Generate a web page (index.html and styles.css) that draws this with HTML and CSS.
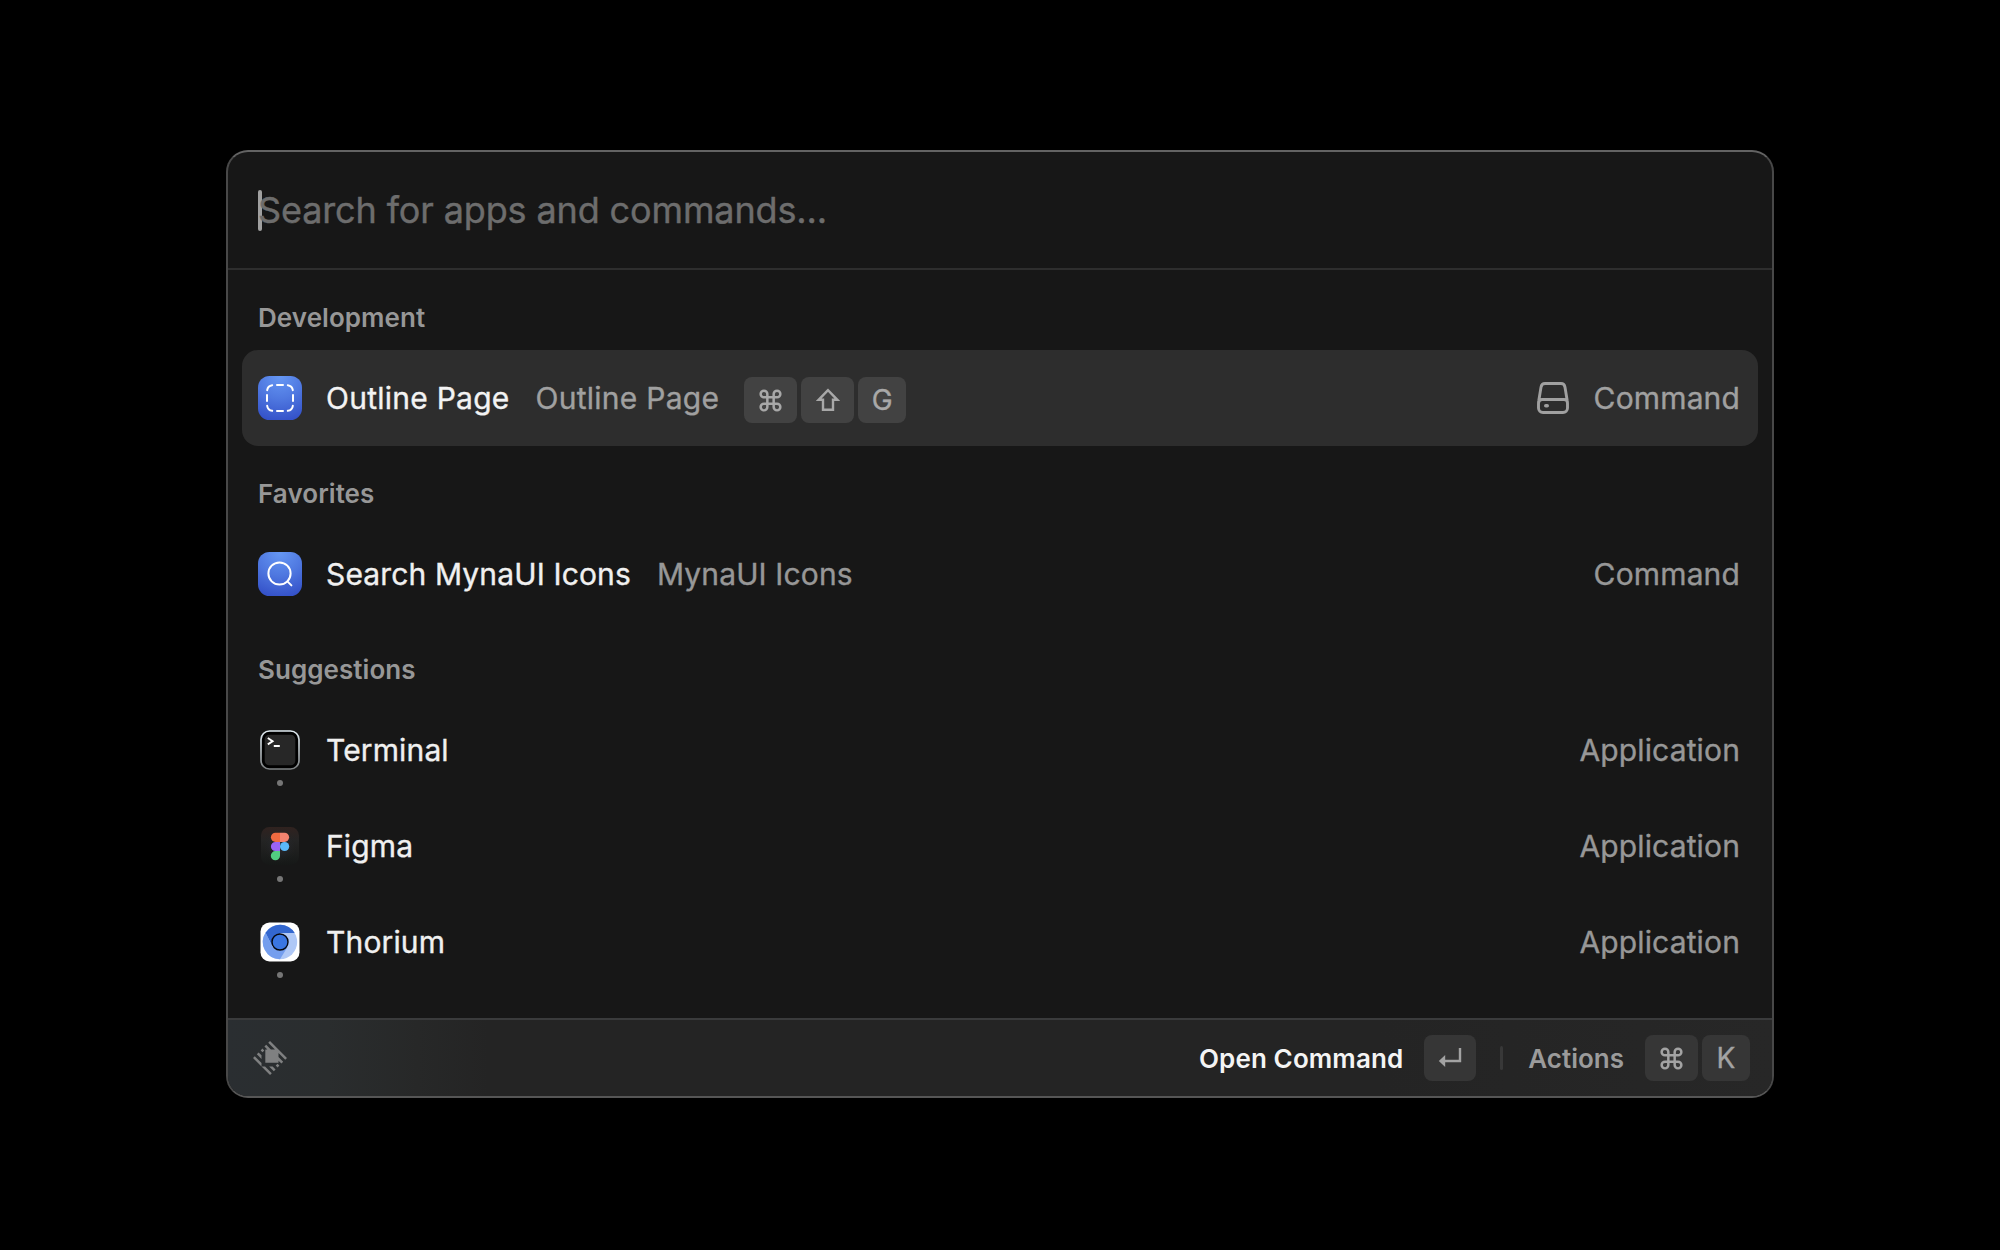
FILE: index.html
```html
<!DOCTYPE html>
<html lang="en">
<head>
<meta charset="utf-8">
<title>Launcher</title>
<link rel="stylesheet" href="styles.css">
</head>
<body>
<svg class="defs" width="0" height="0" aria-hidden="true">
  <defs>
    <radialGradient id="blue" cx="0.5" cy="0" r="1.05">
      <stop offset="0" stop-color="#6698f4"/><stop offset="0.5" stop-color="#4f78e0"/><stop offset="1" stop-color="#3350c8"/>
    </radialGradient>
    <symbol id="cmd" viewBox="0 0 24 24">
      <path fill="none" stroke="currentColor" stroke-width="2.6" d="M8.7 8.7V5.2a3.5 3.5 0 1 0-3.5 3.5h13.6a3.5 3.5 0 1 0-3.5-3.5v13.6a3.5 3.5 0 1 0 3.5-3.5H5.2a3.5 3.5 0 1 0 3.5 3.5z"/>
    </symbol>
  </defs>
</svg>
<main class="window">
  <header class="search"><span class="caret"></span><span class="placeholder">Search for apps and commands...</span></header>
  <div class="list">
    <h2 class="section">Development</h2>
    <div class="row selected">
      <svg class="icon" viewBox="0 0 44 44"><rect width="44" height="44" rx="11.5" fill="url(#blue)"/>
        <g fill="none" stroke="#fff" stroke-width="2" stroke-linecap="round"><path d="M19 9h6M19 35h6M9 19v6M35 19v6M9.2 14.2Q9.8 9.8 14.2 9.2M29.8 9.2Q34.2 9.8 34.8 14.2M34.8 29.8Q34.2 34.2 29.8 34.8M14.2 34.8Q9.8 34.2 9.2 29.8"/></g></svg>
      <span class="title">Outline Page</span>
      <span class="subtitle">Outline Page</span>
      <span class="keys">
        <kbd class="key wide"><svg class="glyph" width="23" height="23"><use href="#cmd"/></svg></kbd>
        <kbd class="key wide"><svg class="glyph" width="24" height="24" viewBox="0 0 24 24"><path fill="none" stroke="currentColor" stroke-width="2.4" d="M12 2.2 2.6 11.8H7v10h10v-10h4.400z"/></svg></kbd>
        <kbd class="key">G</kbd>
      </span>
      <svg class="drive" width="32" height="32" viewBox="0 0 32 32"><g fill="none" stroke="currentColor" stroke-width="2.900" stroke-linejoin="round"><path d="M1.500 21.500V26a4.500 4.500 0 0 0 4.500 4.500h20a4.500 4.500 0 0 0 4.500-4.500V21q0-3.500-3.500-3.500H5q-3.500 0-3.500 4zM1.500 22Q1.500 20 1.800 18.500L4 5.200Q4.600 1.500 8 1.500h16q3.400 0 4 3.700l2.200 13.300Q30.500 20 30.500 22"/></g><rect x="7" y="22" width="5" height="3.600" rx="1.800" fill="currentColor"/></svg>
      <span class="kind">Command</span>
    </div>
    <h2 class="section">Favorites</h2>
    <div class="row">
      <svg class="icon" viewBox="0 0 44 44"><rect width="44" height="44" rx="11.5" fill="url(#blue)"/><g fill="none" stroke="#fff" stroke-width="2" stroke-linecap="round"><circle cx="21.500" cy="21.500" r="11.100"/><path d="m29.400 29.400 4 4"/></g></svg>
      <span class="title">Search MynaUI Icons</span>
      <span class="subtitle">MynaUI Icons</span>
      <span class="kind">Command</span>
    </div>
    <h2 class="section">Suggestions</h2>
    <div class="row running">
      <svg class="icon" viewBox="0 0 44 44"><defs><linearGradient id="rim" x2="0" y2="1"><stop stop-color="#dfeaf0"/><stop offset="1" stop-color="#7d8183"/></linearGradient></defs><rect x="3" y="3" width="38" height="38" rx="8.500" fill="#000" stroke="url(#rim)" stroke-width="1.700"/><rect x="6.700" y="6.700" width="30.600" height="30.600" rx="4.500" fill="#272727"/><path d="m9.800 10 4.800 3.200-4.800 3.200M15.800 18h6" fill="none" stroke="#fff" stroke-width="1.900"/></svg>
      <span class="title">Terminal</span>
      <span class="kind">Application</span>
    </div>
    <div class="row running">
      <svg class="icon" viewBox="0 0 44 44"><defs><linearGradient id="fig" x2="0" y2="1"><stop stop-color="#30221f"/><stop offset="0.35" stop-color="#242424"/><stop offset="1" stop-color="#161817"/></linearGradient><radialGradient id="halo"><stop stop-color="#31354a" stop-opacity=".6"/><stop offset="1" stop-color="#222" stop-opacity="0"/></radialGradient></defs><rect x="3" y="3" width="38" height="38" rx="8.500" fill="url(#fig)"/><circle cx="22" cy="22" r="17" fill="url(#halo)"/>
        <path fill="#ef6a40" d="M22 8.700h-4.500a4.600 4.600 0 0 0 0 9.200H22z"/><path fill="#f3836f" d="M22 8.700h4.500a4.600 4.600 0 0 1 0 9.200H22z"/><path fill="#9a63f5" d="M22 17.900h-4.500a4.600 4.600 0 0 0 0 9.200H22z"/><circle cx="26.600" cy="22.500" r="4.600" fill="#5bb9f8"/><path fill="#51cc81" d="M22 27.100h-4.500a4.600 4.600 0 1 0 4.500 4.600z"/></svg>
      <span class="title">Figma</span>
      <span class="kind">Application</span>
    </div>
    <div class="row running">
      <svg class="icon" viewBox="0 0 44 44"><rect x="2.500" y="2.500" width="39" height="39" rx="9" fill="#fff"/><circle cx="22" cy="22" r="17.200" fill="#afc8f6"/><path fill="#3367cf" d="M7.700 12.500A17.200 17.200 0 0 1 36.700 13H22L14.200 26z"/><path fill="#749eee" d="M7.700 12.500A17.200 17.200 0 0 0 22 39.200L29.800 26.500 14.200 26.500z"/><path fill="#3367cf" d="M7.700 12.500 14.200 25 22 13z"/><circle cx="22" cy="22" r="8" fill="#3a76e2" stroke="#05070d" stroke-width="1.400"/></svg>
      <span class="title">Thorium</span>
      <span class="kind">Application</span>
    </div>
  </div>
  <footer class="footer">
    <svg class="logo" width="34" height="34" viewBox="0 0 24 24"><path fill="currentColor" d="M6.004 15.492v2.504L0 11.992l1.258-1.249Zm2.504 2.504H6.004L12.008 24l1.253-1.253zm14.240-4.747L24 11.997 12.003 0 10.750 1.251 15.491 6h-2.865L9.317 2.692 8.065 3.944l2.060 2.060H8.691v9.310H18v-1.432l2.060 2.060 1.252-1.252-3.312-3.320V8.506ZM6.630 5.372 5.380 6.625l1.342 1.343 1.251-1.253Zm10.655 10.655-1.247 1.251 1.342 1.343 1.253-1.251zM3.944 8.059 2.692 9.310l3.312 3.314v-2.506zm9.936 9.937h-2.504l3.314 3.312 1.250-1.252z"/></svg>
    <span class="primary">Open Command</span>
    <kbd class="key enter"><svg class="glyph" width="24" height="22" viewBox="0 0 24 22"><path fill="none" stroke="currentColor" stroke-width="2.400" d="M22 1v13H5"/><path fill="currentColor" d="M7.200 8v12L.8 14z"/></svg></kbd>
    <span class="divider"></span>
    <span class="secondary">Actions</span>
    <span class="keys">
      <kbd class="key wide"><svg class="glyph" width="23" height="23"><use href="#cmd"/></svg></kbd>
      <kbd class="key">K</kbd>
    </span>
  </footer>
</main>
</body>
</html>
```
FILE: styles.css
```css
* { box-sizing: border-box; }
body {
  margin: 0;
  height: 1250px;
  padding-top: 150px;
  background: #000;
  font-family: Inter, "Liberation Sans", sans-serif;
  font-weight: 400;
  overflow: hidden;
}
.defs { position: absolute; }
.window {
  width: 1548px;
  height: 948px;
  margin: 0 auto;
  display: flex;
  flex-direction: column;
  background: #171717;
  border: 2px solid #484848;
  border-top-color: #636363;
  border-bottom-color: #565656;
  border-radius: 22px;
  overflow: hidden;
}
.search {
  height: 118px;
  display: flex;
  align-items: center;
  padding-left: 30px;
  border-bottom: 2px solid #2e2e2e;
  font-size: 36px;
  letter-spacing: -0.13px;
  color: #6d6d6d;
  -webkit-text-stroke: 0.4px;
}
.caret {
  width: 4px;
  height: 41px;
  margin-right: -4px;
  border-radius: 2px;
  background: #a0a0a0;
}
.list { flex: 1; padding: 0 14px; }
.section {
  height: 80px;
  margin: 0;
  padding: 15px 16px 0;
  font-size: 26px;
  font-weight: 600;
  line-height: 66px;
  letter-spacing: 0.06px;
  color: #979797;
}
.row {
  position: relative;
  height: 96px;
  display: flex;
  align-items: center;
  padding: 0 18px 0 16px;
  border-radius: 16px;
  font-size: 30px;
  letter-spacing: 0.14px;
  color: #f0f0f0;
  -webkit-text-stroke: 0.35px;
}
.selected { background: #2d2d2d; color: #f3f3f3; }
.selected .title, .selected .subtitle { letter-spacing: 0.25px; }
.icon { width: 44px; height: 44px; margin-right: 24px; }
.running::after {
  content: "";
  position: absolute;
  left: 35px;
  top: 78px;
  width: 6px;
  height: 6px;
  border-radius: 50%;
  background: #767676;
}
.subtitle { margin-left: 26px; color: #979797; }
.kind { margin-left: auto; color: #979797; }
.selected .subtitle, .selected .kind { color: #a0a0a0; }
.keys { display: flex; gap: 4px; }
.row .keys { margin: 4px 0 0 25px; }
.key {
  width: 48px;
  height: 46px;
  display: flex;
  align-items: center;
  justify-content: center;
  border-radius: 8px;
  background: #424242;
  color: #a8a8a8;
  font: 400 28px Inter, sans-serif;
  letter-spacing: 0;
  -webkit-text-stroke: 0.35px;
}
.wide { width: 53px; }
.drive { margin-left: auto; color: #a0a0a0; }
.drive + .kind { margin-left: 25px; }
.footer {
  height: 78px;
  display: flex;
  align-items: center;
  padding: 0 22px 0 25px;
  border-top: 2px solid #3a3b3c;
  background: linear-gradient(90deg, #2a2e31 0, #2a2d2e 100px, #272828 190px, #242424 260px, #242424 1150px, #272727 100%);
  font-size: 26px;
  font-weight: 600;
}
.logo { color: #7f8081; }
.primary { margin-left: auto; letter-spacing: 0.12px; color: #f4f4f4; }
.footer .key { background: #363636; color: #a3a3a3; }
.footer .enter { width: 52px; margin: 0 24px 0 21px; }
.divider { width: 3px; height: 24px; border-radius: 2px; background: #383838; margin-right: 25px; }
.secondary { color: #9b9b9b; margin-right: 21px; }
```
